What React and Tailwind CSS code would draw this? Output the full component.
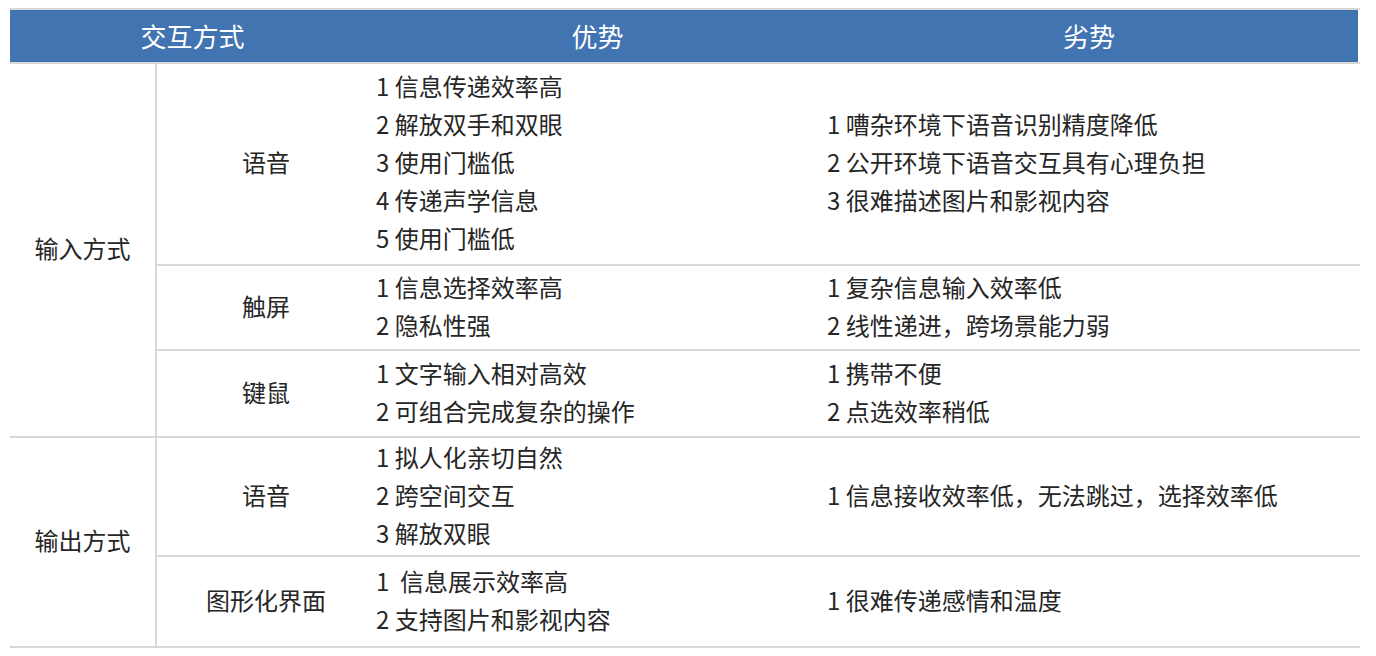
import React from "react";

const groups = [
  {
    name: "输入方式",
    rows: [
      {
        name: "语音",
        h: "h-[202px]",
        pros: ["1 信息传递效率高", "2 解放双手和双眼", "3 使用门槛低", "4 传递声学信息", "5 使用门槛低"],
        cons: ["1 嘈杂环境下语音识别精度降低", "2 公开环境下语音交互具有心理负担", "3 很难描述图片和影视内容"],
      },
      {
        name: "触屏",
        h: "h-[85px]",
        pros: ["1 信息选择效率高", "2 隐私性强"],
        cons: ["1 复杂信息输入效率低", "2 线性递进，跨场景能力弱"],
      },
      {
        name: "键鼠",
        h: "h-[85px]",
        pros: ["1 文字输入相对高效", "2 可组合完成复杂的操作"],
        cons: ["1 携带不便", "2 点选效率稍低"],
      },
    ],
  },
  {
    name: "输出方式",
    rows: [
      {
        name: "语音",
        h: "h-[119px]",
        pros: ["1 拟人化亲切自然", "2 跨空间交互", "3 解放双眼"],
        cons: ["1 信息接收效率低，无法跳过，选择效率低"],
      },
      {
        name: "图形化界面",
        h: "h-[89px]",
        pros: ["1  信息展示效率高", "2 支持图片和影视内容"],
        cons: ["1 很难传递感情和温度"],
      },
    ],
  },
];

const Lines = ({ items }) => (
  <div className="flex flex-col">
    {items.map((t, i) => (
      <div key={i} className="whitespace-pre leading-[38px]">
        {t}
      </div>
    ))}
  </div>
);

export default function App() {
  return (
    <div
      className="bg-white min-h-screen pt-[8px] pl-[10px] text-[#262626] text-[24px]"
      style={{ fontFamily: '"Noto Sans CJK SC", "Noto Sans", sans-serif' }}
    >
      <div className="w-[1350px]">
        {/* Header */}
        <div className="border-y-2 border-[#d9d9d9]">
          <div className="flex h-[52px] w-[1348px] items-center bg-[#4174b0] pb-[2px] text-[26px] text-white">
            <div className="w-[365px] text-center">交互方式</div>
            <div className="w-[445px] text-center">优势</div>
            <div className="flex-1 text-center">劣势</div>
          </div>
        </div>

        {/* Body */}
        {groups.map((g) => (
          <div key={g.name} className="flex border-b-2 border-[#d9d9d9]">
            <div className="flex w-[147px] items-center justify-center border-r-2 border-[#d9d9d9] pb-[4px]">
              {g.name}
            </div>
            <div className="flex flex-1 flex-col">
              {g.rows.map((r, i) => (
                <div
                  key={r.name}
                  className={`flex ${r.h} ${i < g.rows.length - 1 ? "border-b-2 border-[#d9d9d9]" : ""}`}
                >
                  <div className="flex w-[218px] items-center justify-center pb-[4px]">{r.name}</div>
                  <div className="flex w-[445px] items-center pb-[4px] pl-[1px]">
                    <Lines items={r.pros} />
                  </div>
                  <div className="flex flex-1 items-center pb-[4px] pl-[7px]">
                    <Lines items={r.cons} />
                  </div>
                </div>
              ))}
            </div>
          </div>
        ))}
      </div>
    </div>
  );
}
